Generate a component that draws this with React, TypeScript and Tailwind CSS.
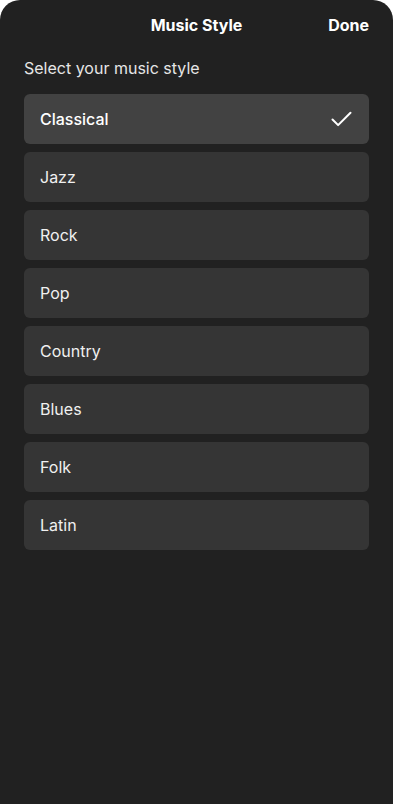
import { Check } from 'lucide-react';

const styles = ['Classical', 'Jazz', 'Rock', 'Pop', 'Country', 'Blues', 'Folk', 'Latin'];

export default function App() {
  const selected = 'Classical';

  return (
    <div className="bg-white min-h-screen" style={{ fontFamily: 'Inter, "Noto Sans", sans-serif' }}>
      <div className="h-[804px] bg-[#212121] rounded-t-[20px] text-white">
        {/* Header */}
        <div className="relative flex items-center justify-center h-[50px]">
          <h1 className="text-[16px] font-bold">Music Style</h1>
          <button className="absolute right-6 text-[16px] font-bold">Done</button>
        </div>

        <div className="px-6">
          <p className="text-[16px] text-[#e6e6e6] mt-[6px] mb-[14px] leading-[24px]">Select your music style</p>

          <div className="flex flex-col gap-2">
            {styles.map((s) => {
              const active = s === selected;
              return (
                <div
                  key={s}
                  className={`flex items-center justify-between h-[50px] px-4 rounded-[6px] ${
                    active ? 'bg-[#424242]' : 'bg-[#353535]'
                  }`}
                >
                  <span className={`text-[16px] ${active ? 'font-medium' : 'font-normal text-[#f0f0f0]'}`}>{s}</span>
                  {active && <Check className="w-[27px] h-[27px] mr-[-2px]" strokeWidth={1.8} />}
                </div>
              );
            })}
          </div>
        </div>
      </div>
    </div>
  );
}
